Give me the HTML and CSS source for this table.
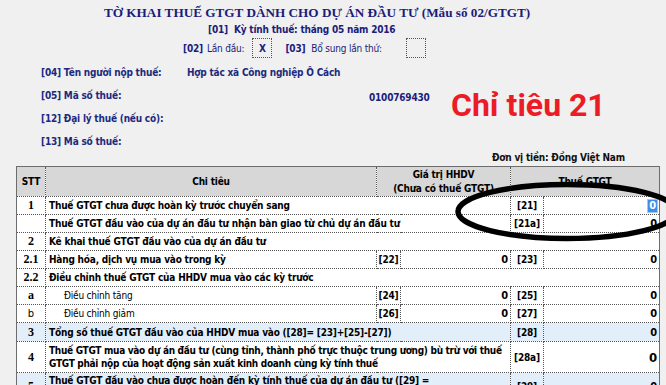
FILE: index.html
```html
<!DOCTYPE html>
<html lang="vi">
<head>
<meta charset="utf-8">
<title>Tờ khai thuế GTGT 02/GTGT</title>
<link rel="stylesheet" href="styles.css">
</head>
<body>
<div class="page">
  <header class="head">
    <h1 class="title">TỜ KHAI THUẾ GTGT DÀNH CHO DỰ ÁN ĐẦU TƯ (Mẫu số 02/GTGT)</h1>
    <div class="period"><span class="code">[01]</span><span>Kỳ tính thuế: tháng 05 năm 2016</span></div>
    <div class="flags">
      <span class="code">[02]</span><span class="plain p1">Lần đầu:</span><span class="box">X</span>
      <span class="code c03">[03]</span><span class="plain p2">Bổ sung lần thứ:</span><span class="box"></span>
    </div>
  </header>

  <section class="info">
    <div class="info-row"><span class="lbl">[04] Tên người nộp thuế:</span><span class="val v-name">Hợp tác xã Công nghiệp Ô Cách</span></div>
    <div class="info-row"><span class="lbl">[05] Mã số thuế:</span><span class="val v-tax">0100769430</span></div>
    <div class="info-row"><span class="lbl">[12] Đại lý thuế (nếu có):</span></div>
    <div class="info-row"><span class="lbl">[13] Mã số thuế:</span></div>
    <div class="unit">Đơn vị tiền: Đồng Việt Nam</div>
  </section>

  <table class="grid">
    <colgroup>
      <col class="w-stt"><col class="w-name"><col class="w-c1"><col class="w-v1"><col class="w-c2"><col class="w-v2">
    </colgroup>
    <thead>
      <tr class="hdr">
        <th class="stt-h">STT</th>
        <th>Chi tiêu</th>
        <th colspan="2">Giá trị HHDV<br>(Chưa có thuế GTGT)</th>
        <th colspan="2">Thuế GTGT</th>
      </tr>
    </thead>
    <tbody>
      <tr>
        <td class="stt">1</td>
        <td colspan="3" class="name">Thuế GTGT chưa được hoàn kỳ trước chuyển sang</td>
        <td class="cd">[21]</td>
        <td class="num"><span class="sel">0</span></td>
      </tr>
      <tr>
        <td class="stt"></td>
        <td colspan="3" class="name">Thuế GTGT đầu vào của dự án đầu tư nhận bàn giao từ chủ dự án đầu tư</td>
        <td class="cd">[21a]</td>
        <td class="num">0</td>
      </tr>
      <tr>
        <td class="stt">2</td>
        <td colspan="5" class="name">Kê khai thuế GTGT đầu vào của dự án đầu tư</td>
      </tr>
      <tr>
        <td class="stt">2.1</td>
        <td class="name">Hàng hóa, dịch vụ mua vào trong kỳ</td>
        <td class="cd">[22]</td>
        <td class="num">0</td>
        <td class="cd">[23]</td>
        <td class="num">0</td>
      </tr>
      <tr>
        <td class="stt">2.2</td>
        <td colspan="5" class="name">Điều chỉnh thuế GTGT của HHDV mua vào các kỳ trước</td>
      </tr>
      <tr>
        <td class="stt">a</td>
        <td class="name sub">Điều chỉnh tăng</td>
        <td class="cd">[24]</td>
        <td class="num">0</td>
        <td class="cd">[25]</td>
        <td class="num">0</td>
      </tr>
      <tr>
        <td class="stt thin">b</td>
        <td class="name sub">Điều chỉnh giảm</td>
        <td class="cd">[26]</td>
        <td class="num">0</td>
        <td class="cd">[27]</td>
        <td class="num">0</td>
      </tr>
      <tr class="blue r3">
        <td class="stt">3</td>
        <td colspan="3" class="name">Tổng số thuế GTGT đầu vào của HHDV mua vào ([28]= [23]+[25]-[27])</td>
        <td class="cd">[28]</td>
        <td class="num">0</td>
      </tr>
      <tr class="r4">
        <td class="stt">4</td>
        <td colspan="3" class="name">Thuế GTGT mua vào dự án đầu tư (cùng tỉnh, thành phố trực thuộc trung ương) bù trừ với thuế GTGT phải nộp của hoạt động sản xuất kinh doanh cùng kỳ tính thuế</td>
        <td class="cd">[28a]</td>
        <td class="num big">0</td>
      </tr>
      <tr class="blue r5">
        <td class="stt">5</td>
        <td colspan="3" class="name">Thuế GTGT đầu vào chưa được hoàn đến kỳ tính thuế của dự án đầu tư ([29] = <span class="nb">[21]+[21a]-[28]-[28a])</span></td>
        <td class="cd">[29]</td>
        <td class="num">0</td>
      </tr>
    </tbody>
  </table>

  <div class="note">Chỉ tiêu 21</div>
  <svg class="mark" width="666" height="385" viewBox="0 0 666 385" aria-hidden="true">
    <ellipse cx="567" cy="211.5" rx="109" ry="27" fill="none" stroke="#000" stroke-width="5.5"/>
  </svg>
</div>
</body>
</html>
```

FILE: styles.css
```css
* { box-sizing: border-box; }
html, body { margin: 0; padding: 0; }
body {
  background: #f0f0f0;
  width: 666px;
  height: 385px;
  overflow: hidden;
  font-family: "DejaVu Sans", sans-serif;
  font-stretch: condensed;
  font-size: 10px;
  letter-spacing: -0.2px;
  color: #000;
}
.page { position: relative; width: 666px; height: 385px; overflow: hidden; }

.head { color: #1c1c7a; }
.title {
  margin: 0;
  padding: 5px 0 0 104px;
  height: 22px;
  font-family: "Liberation Serif", serif;
  font-stretch: normal;
  font-weight: bold;
  font-size: 13.2px;
  letter-spacing: 0;
  line-height: 15px;
  white-space: nowrap;
}
.period {
  display: flex;
  gap: 6px;
  padding-left: 208px;
  height: 16px;
  line-height: 16px;
  font-weight: bold;
}
.flags {
  display: flex;
  align-items: center;
  padding-left: 183px;
  height: 20px;
}
.flags .code { font-weight: bold; margin-right: 4px; }
.flags .p1 { margin-right: 8px; }
.flags .c03 { margin-left: 13px; margin-right: 6px; }
.flags .p2 { margin-right: 24px; }
.box {
  width: 20px;
  height: 20px;
  border: 1px dotted #555;
  background: #f0f0f0;
  display: flex;
  align-items: center;
  justify-content: center;
  font-weight: bold;
  color: #1c1c7a;
}

.info { padding-top: 3px; color: #1c2a7e; font-weight: bold; }
.info-row {
  display: flex;
  height: 23px;
  align-items: center;
  padding-left: 41px;
}
.lbl { width: 146px; white-space: nowrap; }
.v-tax { margin-left: 182px; padding-top: 4px; color: #1c1c7a; }
.unit {
  padding-left: 492px;
  height: 12px;
  line-height: 12px;
  color: #111;
  margin-top: -1px;
}

.grid {
  margin: 2px 0 0 16px;
  width: 643px;
  table-layout: fixed;
  border-collapse: collapse;
  background: #fff;
  border-top: 1px solid #6d6d6d;
  border-left: 1px solid #6d6d6d;
  border-right: 1px solid #6d6d6d;
  font-weight: bold;
}
.w-stt { width: 29px; }
.w-name { width: 331px; }
.w-c1 { width: 24px; }
.w-v1 { width: 110px; }
.w-c2 { width: 33px; }
.w-v2 { width: 116px; }

.grid th, .grid td {
  border: 1px dotted #555;
  padding: 0 3px;
  height: 18px;
  line-height: 13px;
  white-space: nowrap;
  overflow: hidden;
}
.grid tr > :first-child { border-left: 1px solid #6d6d6d; }
.grid tr > :last-child { border-right: 1px solid #6d6d6d; }
.grid thead th { border-top: 1px solid #6d6d6d; }
.hdr th {
  background: #d7d7d7;
  height: 30px;
  font-weight: bold;
  text-align: center;
  line-height: 14px;
}
.stt-h { padding: 0 2px; }
.stt {
  text-align: center;
  font-family: "Liberation Serif", serif;
  font-stretch: normal;
  letter-spacing: 0;
  font-size: 12px;
}
.grid td.stt { padding: 0; }
.grid td.thin { font-family: "DejaVu Sans", sans-serif; font-weight: normal; font-size: 10px; }
.name { text-align: left; }
.grid td.sub { padding-left: 18px; font-weight: normal; }
.grid td.cd { text-align: center; padding: 0; }
.num { text-align: right; font-size: 11px; }
.grid td.num { padding-right: 2px; }
.grid td.big { font-size: 13px; }
.sel {
  display: inline-block;
  background: #3d8eea;
  color: #fff;
  padding: 0 1px;
  outline: 1px solid #9ec9f5;
  line-height: 12px;
}
.blue td { background: #e2effb; }
.r3 td { height: 19px; }
.r4 td { height: 31px; }
.grid .r4 td.name { white-space: normal; line-height: 13px; letter-spacing: -0.3px; padding-right: 0; }
.grid .r5 td.name { white-space: normal; line-height: 13px; vertical-align: top; padding-top: 1px; }
.nb { white-space: nowrap; }

.note {
  position: absolute;
  left: 451px;
  top: 86px;
  font-family: Roboto, sans-serif;
  font-stretch: normal;
  letter-spacing: 0;
  font-weight: bold;
  font-size: 32px;
  line-height: 38px;
  color: #eb1c26;
}
.mark { position: absolute; left: 0; top: 0; pointer-events: none; }
```
